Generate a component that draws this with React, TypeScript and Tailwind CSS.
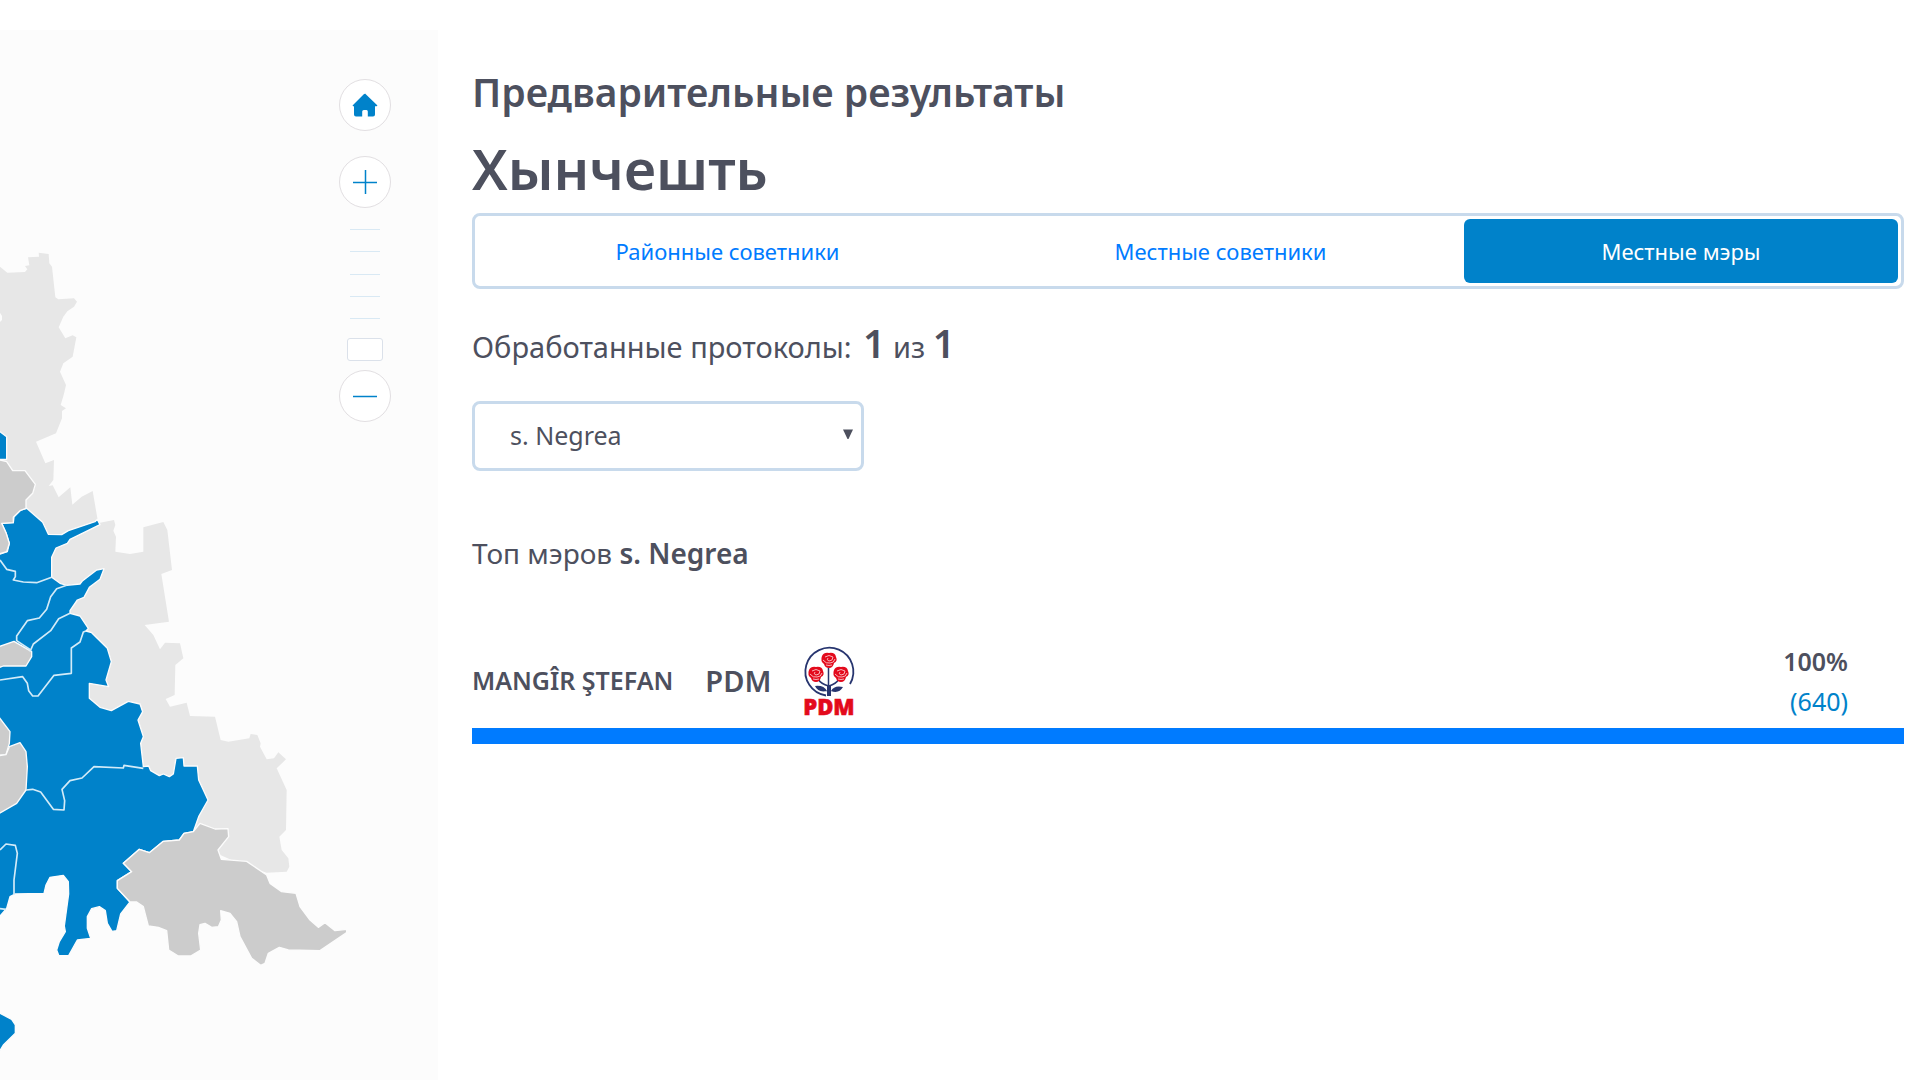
import { useState } from "react";

const tabs = ["Районные советники", "Местные советники", "Местные мэры"];

const localities = ["s. Negrea"];

const candidates = [
  { name: "MANGÎR ŞTEFAN", party: "PDM", percent: 100, votes: 640 },
];

const ticks = [0, 1, 2, 3, 4];

// district shapes, drawn at three units per pixel
const neighbours =
  "M0 800L22 818L75 816L82 808L75 798L88 796L84 772L117 770L116 758L146 762L148 790L156 800L166 892L175 898L222 895L231 905L222 920L202 934L190 950L176 982L196 1015L218 1006L229 1012L218 1070L190 1090L180 1115L198 1155L191 1185L182 1215L198 1225L186 1233L186 1255L168 1300L108 1325L136 1390L162 1380L160 1440L146 1458L158 1456L176 1492L211 1462L217 1514L245 1490L278 1473L293 1560L300 1568L342 1560L346 1575L340 1592L348 1610L346 1655L390 1662L430 1655L430 1582L490 1566L502 1590L516 1710L484 1722L507 1865L434 1875L460 1905L480 1948L495 1928L540 1930L550 1975L526 1995L524 2085L497 2097L510 2120L560 2108L570 2148L645 2150L662 2220L685 2225L748 2215L752 2202L772 2205L782 2230L780 2240L800 2278L822 2275L835 2257L858 2278L830 2305L860 2370L858 2490L838 2510L845 2550L865 2575L868 2600L860 2615L800 2618L740 2600L560 2520L0 2400Z";

const won =
  "M-10 1662L0 1662L22 1655L28 1630L18 1598L5 1570L40 1568L42 1550L62 1530L80 1525L128 1567L145 1603L185 1604L205 1592L285 1565L292 1558L300 1574L210 1618L202 1630L168 1644L155 1672L155 1732L180 1750L200 1756L240 1752L248 1742L290 1710L312 1706L300 1738L268 1762L252 1792L232 1800L210 1832L210 1840L240 1848L265 1885L258 1893L275 1898L322 1945L334 1985L318 2040L326 2060L268 2050L268 2095L300 2122L334 2132L385 2104L420 2112L428 2135L414 2160L430 2210L422 2230L430 2300L446 2298L452 2312L478 2327L490 2322L508 2330L520 2322L528 2275L550 2273L552 2298L592 2298L596 2340L624 2400L596 2450L580 2495L552 2500L538 2520L490 2524L448 2558L418 2548L370 2590L395 2615L352 2642L352 2665L390 2706L362 2742L350 2792L336 2794L322 2770L316 2732L298 2720L275 2726L262 2750L262 2785L272 2815L232 2820L206 2867L176 2866L170 2850L178 2825L196 2795L193 2778L206 2682L205 2645L190 2626L150 2632L138 2655L132 2680L45 2682L30 2690L20 2725L0 2748L-10 2748Z";

const pending = [
  "M-10 1380L0 1380L20 1385L38 1412L75 1412L106 1453L98 1480L78 1500L78 1525L60 1532L40 1552L40 1568L5 1570L18 1598L28 1630L20 1655L-10 1664Z",
  "M-10 1942L42 1924L95 1955L95 1970L78 1998L10 1998L-10 2006Z",
  "M-10 2145L0 2155L30 2195L28 2230L18 2264L-10 2266Z",
  "M-10 2268L18 2264L28 2240L60 2228L78 2255L82 2300L78 2370L50 2410L-10 2445Z",
  "M600 2470L645 2487L684 2486L686 2510L654 2550L664 2578L740 2584L800 2625L810 2650L845 2675L888 2680L900 2720L930 2760L955 2782L975 2768L1005 2792L1040 2788L1040 2798L960 2852L865 2850L838 2842L805 2860L795 2890L782 2896L755 2875L720 2810L710 2765L690 2740L662 2732L664 2760L655 2780L635 2782L615 2770L600 2774L596 2800L602 2850L572 2868L535 2868L506 2850L500 2792L475 2782L445 2778L430 2720L410 2706L390 2706L352 2665L352 2642L395 2615L370 2590L418 2548L448 2558L490 2524L538 2520L552 2500L580 2495Z",
];

const borders = [
  "M0 1680L20 1708L46 1714L46 1730L40 1740L70 1746L110 1748L155 1732",
  "M200 1756L170 1766L152 1790L140 1828L118 1854L82 1862L50 1908L50 1922L92 1950",
  "M210 1840L176 1856L152 1892L100 1932L90 1955",
  "M258 1893L250 1896L240 1926L214 1944L214 2020L162 2026L114 2088L98 2088L86 2072L82 2050L68 2030L0 2040",
  "M430 2305L372 2296L370 2304L282 2300L246 2334L210 2342L186 2368L194 2402L192 2430L160 2428L122 2376L98 2368L78 2370",
  "M0 2550L18 2532L46 2536L52 2560L42 2640L42 2684",
  "M0 2726L18 2728",
];

function DistrictMap() {
  return (
    <svg
      viewBox="0 0 1314 3240"
      className="block w-full"
      role="img"
      aria-label="Хынчешть"
    >
      <path d={neighbours} fill="#e7e7e7" />
      <path d="M0 938L6 948L6 960L0 966Z" fill="#fcfcfc" />
      <g stroke="#fcfcfc" strokeWidth="4" strokeLinejoin="round">
        <path d={won} fill="#0082ca" />
        <path d="M-10 1290L0 1295L20 1310L20 1378L-10 1378Z" fill="#0082ca" />
        <path
          d="M-10 3036L0 3040L35 3058L46 3075L46 3100L10 3135L0 3152L-10 3155Z"
          fill="#0082ca"
        />
        {pending.map((d) => (
          <path key={d} d={d} fill="#cccccc" />
        ))}
      </g>
      <g fill="none" stroke="#d3ebf8" strokeWidth="5" strokeLinejoin="round">
        {borders.map((d) => (
          <path key={d} d={d} />
        ))}
      </g>
    </svg>
  );
}

function RoundButton({
  label,
  onClick,
  children,
}: {
  label: string;
  onClick: () => void;
  children: React.ReactNode;
}) {
  return (
    <button
      type="button"
      aria-label={label}
      onClick={onClick}
      className="flex size-[52px] items-center justify-center rounded-full border border-[#e2dfe2] bg-white text-[#0082ca]"
    >
      {children}
    </button>
  );
}

function ZoomControls() {
  const [zoom, setZoom] = useState(0);

  return (
    <div className="absolute top-[49px] right-[47px] flex flex-col items-center">
      <RoundButton label="Домой" onClick={() => setZoom(0)}>
        <svg viewBox="0 0 26 24" className="h-6 w-[26px]" fill="currentColor">
          <path d="M13 0.5L25.5 12.5L24 13.5L23 13V21.5Q23 23.5 21 23.5H15.8V18.5Q15.8 17 14.5 17H11.8Q10.2 17 10.2 18.5V23.5H4Q2 23.5 2 21.5V13L1.5 13.5L0.5 12.5L11.5 1.5Q13 0.2 14.5 1.5Z" />
        </svg>
      </RoundButton>
      <div className="h-[25px]" />
      <RoundButton label="Приблизить" onClick={() => setZoom(zoom + 1)}>
        <svg viewBox="0 0 24 24" className="size-6" stroke="currentColor">
          <path d="M0 12.5H24M12.5 0V24" strokeWidth="1.5" />
        </svg>
      </RoundButton>
      <div className="relative flex h-[162px] w-9 justify-center pt-[21px]">
        <div className="flex h-[90px] w-[30px] flex-col justify-between">
          {ticks.map((tick) => (
            <div key={tick} className="h-px bg-[#d9e9f4]" />
          ))}
        </div>
        <input
          type="range"
          aria-label="Масштаб"
          min={0}
          max={5}
          value={zoom}
          onChange={(e) => setZoom(Number(e.target.value))}
          className="absolute inset-x-0 top-2 h-[145px] w-9 appearance-none bg-transparent [direction:rtl] [writing-mode:vertical-lr] [&::-webkit-slider-thumb]:h-[23px] [&::-webkit-slider-thumb]:w-9 [&::-webkit-slider-thumb]:appearance-none [&::-webkit-slider-thumb]:rounded-[3px] [&::-webkit-slider-thumb]:border [&::-webkit-slider-thumb]:border-[#dbe1ea] [&::-webkit-slider-thumb]:bg-white"
        />
      </div>
      <RoundButton label="Отдалить" onClick={() => setZoom(zoom - 1)}>
        <svg viewBox="0 0 24 24" className="size-6" stroke="currentColor">
          <path d="M0 12.5H24" strokeWidth="1.5" />
        </svg>
      </RoundButton>
    </div>
  );
}

function Rose({ x, y }: { x: number; y: number }) {
  return (
    <g transform={`translate(${x} ${y})`}>
      <path
        d="M-7 -4Q-5 -8 0 -7Q6 -8 7 -3Q9 1 5 3Q4 8 0 8Q-4 8 -5 4Q-9 1 -7 -4Z"
        fill="#e30a1c"
      />
      <path
        d="M-4 -3Q0 -6 4 -3Q4 1 0 1Q-3 0 -1 -2M-6 0Q-3 4 1 3Q5 3 6 -1M-3 5Q0 6 3 5"
        fill="none"
        stroke="#fbc5c9"
        strokeWidth="0.9"
      />
    </g>
  );
}

function PartyLogo() {
  return (
    <svg
      viewBox="0 0 52 70"
      className="h-[70px] w-[52px] overflow-visible"
      role="img"
      aria-label="PDM"
    >
      <path
        d="M23 49.5A24 24 0 1 1 47 38"
        fill="none"
        stroke="#27356f"
        strokeWidth="1.8"
      />
      <path
        d="M25.5 22V49M25.5 40Q18 38 15 33M26 40Q33 38 36 33"
        fill="none"
        stroke="#27356f"
        strokeWidth="1.5"
      />
      <path
        d="M24 40H28V50H24ZM24 45Q15 47 12 40Q21 39 24 45ZM28 45Q31 39 40 41Q36 48 28 45Z"
        fill="#27356f"
      />
      <Rose x={26} y={14} />
      <Rose x={13} y={28} />
      <Rose x={38} y={28} />
      <text
        x="26"
        y="69"
        textAnchor="middle"
        fill="#e30a1c"
        stroke="#e30a1c"
        strokeWidth="0.6"
        className="font-['Open_Sans',sans-serif] text-[22px] font-extrabold"
      >
        PDM
      </text>
    </svg>
  );
}

export default function App() {
  const [active, setActive] = useState(2);
  const [locality, setLocality] = useState(localities[0]);

  return (
    <div className="flex min-h-screen bg-white font-['Noto_Sans',sans-serif] text-[#4d505e]">
      <aside className="relative mt-[30px] h-[calc(100vh-30px)] w-[438px] shrink-0 overflow-hidden bg-[#fcfcfc]">
        <div className="-mt-[30px]">
          <DistrictMap />
        </div>
        <ZoomControls />
      </aside>

      <main className="min-w-0 flex-1 pt-[68px] pr-4 pl-[34px]">
        <h2 className="text-[39px] leading-[48px] font-semibold">
          Предварительные результаты
        </h2>
        <h1 className="mt-4 text-[56px] leading-[72px] font-semibold">
          Хынчешть
        </h1>

        <div
          role="tablist"
          className="mt-[9px] flex h-[76px] rounded-lg border-[3px] border-[#c8daec] p-[3px]"
        >
          {tabs.map((tab, index) => (
            <button
              key={tab}
              type="button"
              role="tab"
              aria-selected={active === index}
              onClick={() => setActive(index)}
              className={`flex-auto rounded-md text-[22px] ${
                active === index ? "bg-[#0082ca] text-white" : "text-[#007bff]"
              }`}
            >
              {tab}
            </button>
          ))}
        </div>

        <p className="mt-[30px] text-[29px] leading-[48px]">
          Обработанные протоколы:{" "}
          <b className="ml-1 text-[39px] leading-[48px] font-semibold">1</b> из{" "}
          <b className="text-[39px] leading-[48px] font-semibold">1</b>
        </p>

        <div className="relative mt-[30px] w-[392px]">
          <select
            aria-label="Населённый пункт"
            value={locality}
            onChange={(e) => setLocality(e.target.value)}
            className="h-[70px] w-full appearance-none rounded-lg border-[3px] border-[#c8daec] bg-white px-[35px] text-[25px]"
          >
            {localities.map((name) => (
              <option key={name}>{name}</option>
            ))}
          </select>
          <svg
            viewBox="0 0 10 10"
            className="pointer-events-none absolute top-7 right-[11px] size-[10px]"
            fill="currentColor"
          >
            <path d="M0 0.5H10L5.5 10H4.5Z" />
          </svg>
        </div>

        <h3 className="mt-16 text-[28px] leading-9">
          Топ мэров <b className="font-semibold">{locality}</b>
        </h3>

        <ul className="mt-[70px]">
          {candidates.map((c) => (
            <li key={c.name}>
              <div className="flex items-center pb-[7px]">
                <span className="text-[25px] font-semibold">{c.name}</span>
                <span className="ml-8 text-[29px] font-semibold">{c.party}</span>
                <span className="ml-8">
                  <PartyLogo />
                </span>
                <div className="mr-14 ml-auto text-right text-[25px] leading-10">
                  <div className="font-semibold">{c.percent}%</div>
                  <div className="text-[#0082ca]">({c.votes})</div>
                </div>
              </div>
              <div className="h-4">
                <div
                  className="h-full bg-[#007bff]"
                  style={{ width: `${c.percent}%` }}
                />
              </div>
            </li>
          ))}
        </ul>
      </main>
    </div>
  );
}
